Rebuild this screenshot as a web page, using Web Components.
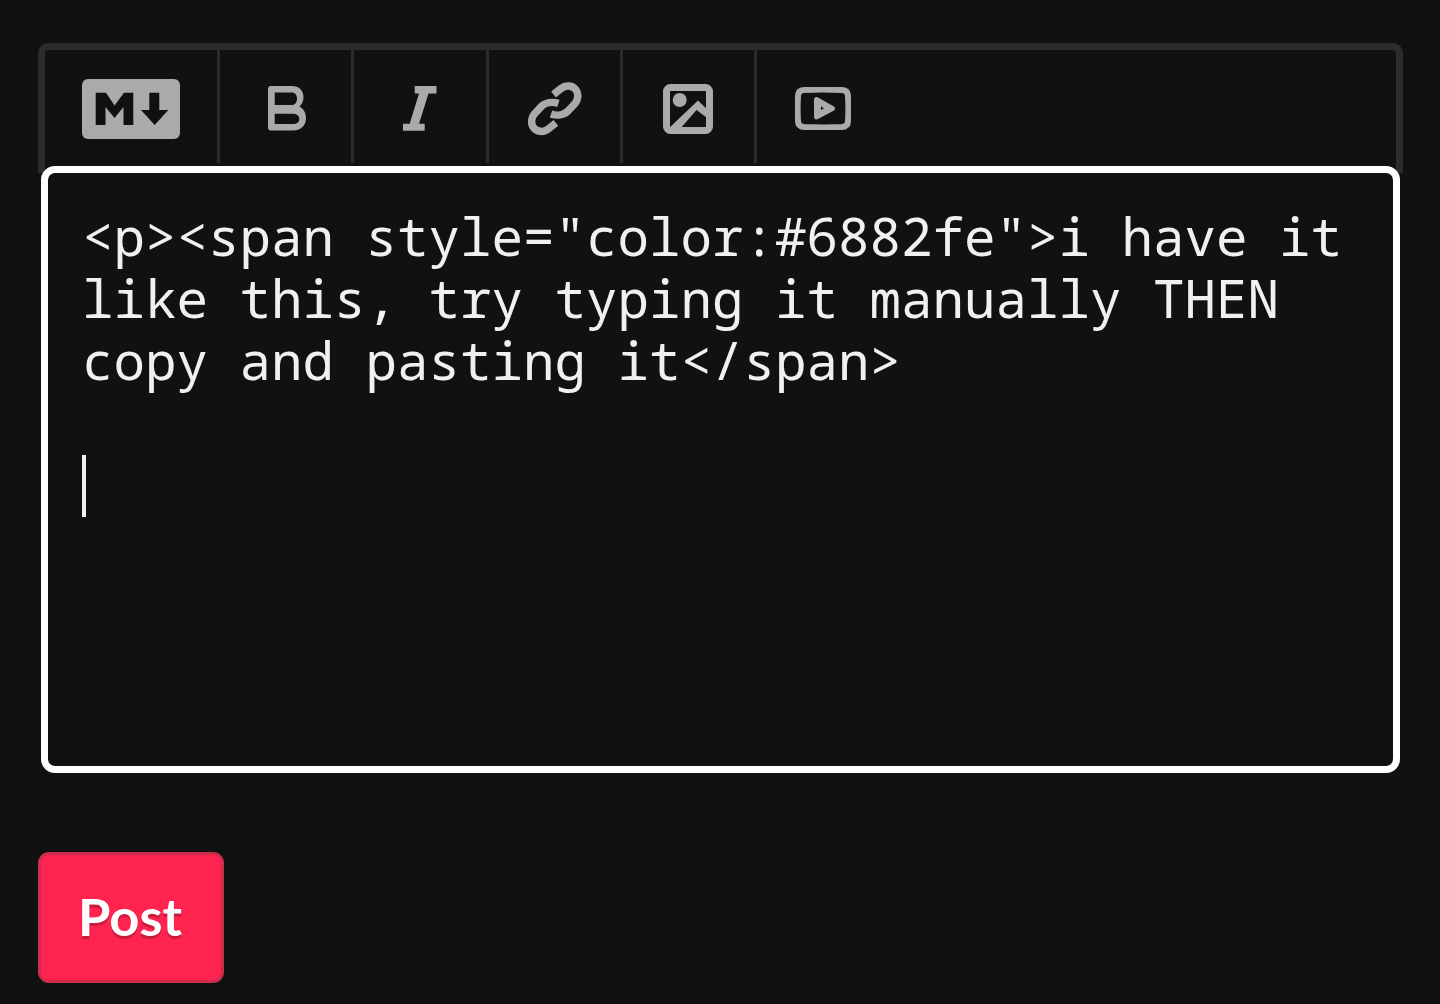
<!DOCTYPE html>
<html>
<head>
<meta charset="utf-8">
<style>
  html, body { margin: 0; background: #111111; }
  body { width: 1440px; height: 1004px; overflow: hidden; }
</style>
</head>
<body>
<post-editor>
  <md-toolbar>
    <tool-button icon="markdown" width="175"></tool-button>
    <tool-button icon="bold" width="134" shift="3"></tool-button>
    <tool-button icon="italic" width="135"></tool-button>
    <tool-button icon="link" width="134"></tool-button>
    <tool-button icon="image" width="134" shift="-1"></tool-button>
    <tool-button icon="video" plain shift="-2"></tool-button>
  </md-toolbar>
  <editor-area>&lt;p&gt;&lt;span style="color:#6882fe"&gt;i have it like this, try typing it manually THEN copy and pasting it&lt;/span&gt;</editor-area>
  <post-button text="Post"></post-button>
</post-editor>
<script>
const LINK_PATH = 'M25.500 12.500L33 6.500C38 2.500 45 3.500 48 8C51 12 50 18 47 21.500L40 29C36 33 29 34 23 32'

const ICONS = {
  markdown: `<svg width="98" height="60" viewBox="0 0 98 60"><rect width="98" height="60" rx="6" fill="#aaa"/><path d="M13.700 46V13.700H24L32.500 26.500L42 13.700H51.300V46H41.500V28L32.500 39L23.500 28V46ZM67.300 13.700H77.300V31H86.300L72.700 46L59 31H67.300Z" fill="#111"/></svg>`,
  bold: `<svg width="38" height="45" viewBox="0 0 38 45"><path fill-rule="evenodd" fill="#aaa" d="M3 0H24C31 0 35.500 4.500 35.500 11C35.500 15 34 18.500 31.500 20.500C35.500 23 38 26.500 38 32C38 39.500 33 44.500 25.500 44.500H3Q0 44.500 0 41.500V3Q0 0 3 0ZM6.700 6.500V19H24C27 19 29 16 29 12.700C29 9 27 6.500 24 6.500ZM6.700 27.700V38H25C29 38 31.300 36 31.300 33C31.300 30 29 27.700 25 27.700Z"/></svg>`,
  italic: `<svg width="34" height="45" viewBox="0 0 34 45"><path fill="#aaa" d="M11.700 0H33.500V7.500H25.500L16 37.700H21.700V44.700H0V37.700H6.700L16 7.500H11.700Z"/></svg>`,
  link: `<svg width="54" height="54" viewBox="0 0 54 54"><g fill="none" stroke="#aaa" stroke-width="7.500"><path d="${LINK_PATH}"/><path d="${LINK_PATH}" transform="rotate(180 26.700 26.700)"/></g></svg>`,
  image: `<svg width="50" height="50" viewBox="0 0 50 50"><rect x="3.500" y="3.500" width="43" height="43" rx="4" fill="none" stroke="#aaa" stroke-width="7"/><circle cx="16.700" cy="16" r="7" fill="#aaa"/><path d="M5 45L35 16.500L47 28V36L33.500 26L17 45Z" fill="#aaa"/></svg>`,
  video: `<svg width="56" height="43" viewBox="0 0 56 43"><path d="M9 3Q28 2 47 3Q53 3.500 53 9Q53.800 21.500 53 34Q53 39.500 47 40Q28 41 9 40Q3 39.500 3 34Q2.200 21.500 3 9Q3 3.500 9 3Z" fill="none" stroke="#aaa" stroke-width="6"/><path fill-rule="evenodd" fill="#aaa" d="M19 12.500C19 10.500 21 9.500 23 10.500L39 19.500C40.500 20.500 40.500 22.500 39 23.500L23 32C21 33 19 32 19 30ZM26 19.500V23L29 21.200Z"/></svg>`
}

class PostEditor extends HTMLElement {
  constructor () {
    super()
    this.attachShadow({ mode: 'open' }).innerHTML = `
      <style>
        :host { display: flex; flex-direction: column; align-items: flex-start; padding: 43px 37px 0 38px; }
      </style>
      <slot></slot>`
  }
}

class MdToolbar extends HTMLElement {
  constructor () {
    super()
    this.attachShadow({ mode: 'open' }).innerHTML = `
      <style>
        :host { display: flex; box-sizing: border-box; width: 1365px; height: 130px; border: 7px solid #2c2c2c; border-bottom: 0; border-radius: 10px 10px 0 0; }
      </style>
      <slot></slot>`
  }
}

class ToolButton extends HTMLElement {
  constructor () {
    super()
    const icon = this.getAttribute('icon')
    const width = this.getAttribute('width') || '134'
    const shift = this.getAttribute('shift') || '0'
    const sep = this.hasAttribute('plain') ? '0' : '3px solid #2c2c2c'
    this.attachShadow({ mode: 'open' }).innerHTML = `
      <style>
        :host { display: flex; box-sizing: border-box; align-items: center; justify-content: center; width: ${width}px; height: 113px; border-right: ${sep}; padding-top: 4px; }
        svg { display: block; margin-left: ${shift}px; }
      </style>
      ${ICONS[icon]}`
  }
}

class EditorArea extends HTMLElement {
  constructor () {
    super()
    this.attachShadow({ mode: 'open' }).innerHTML = `
      <style>
        :host { display: block; box-sizing: border-box; width: 1359px; height: 607px; margin: -7px 0 0 3px; background: #111; border: 7px solid #fff; border-radius: 14px; padding: 32px 34px 0; color: #f0f0f0; font: 52.500px/62px "Noto Sans Mono", "Droid Sans Mono", "DejaVu Sans Mono", monospace; }
        .text { white-space: pre-wrap; overflow-wrap: break-word; }
        .caret { display: block; width: 4px; height: 62px; margin-top: 64px; background: #f0f0f0; }
      </style>
      <div class="text"><slot></slot></div>
      <span class="caret"></span>`
  }
}

class PostButton extends HTMLElement {
  constructor () {
    super()
    this.attachShadow({ mode: 'open' }).innerHTML = `
      <style>
        :host { display: flex; box-sizing: border-box; align-items: center; justify-content: center; width: 186px; height: 131px; margin-top: 79px; padding: 0 2px 5px 0; background: #ff2450; border: 3px solid #cc2d4d; border-radius: 11px; color: #fff; font: 700 52.500px "Lato", sans-serif; text-shadow: 0 3px 0 rgba(0, 0, 0, .22); }
      </style>
      ${this.getAttribute('text')}`
  }
}

customElements.define('post-editor', PostEditor)
customElements.define('md-toolbar', MdToolbar)
customElements.define('tool-button', ToolButton)
customElements.define('editor-area', EditorArea)
customElements.define('post-button', PostButton)
</script>
</body>
</html>
